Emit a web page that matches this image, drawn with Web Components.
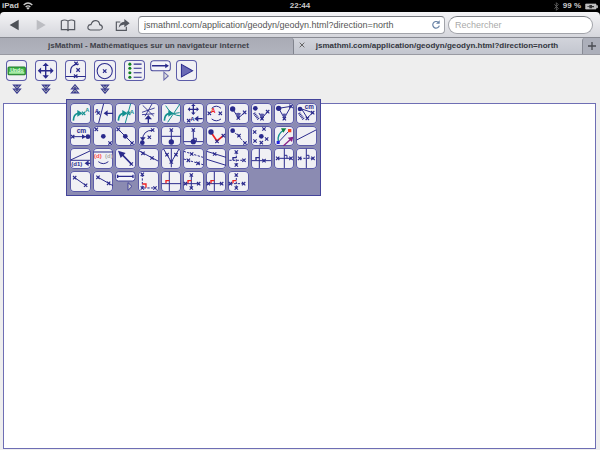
<!DOCTYPE html>
<html lang="fr">
<head>
<meta charset="utf-8">
<title>geodyn</title>
<style>
html,body{margin:0;height:100%}
body{font-family:"Liberation Sans",Arial,sans-serif;background:#eee;overflow:hidden}
</style>
</head>
<body>
<geo-app></geo-app>
<script>
const B='#2a2a8c',T='#149090',R='#f02020';
const x=(a,b,c=B,s=5)=>`<path d="M${a-s} ${b-s}l${2*s} ${2*s}M${a+s} ${b-s}l${-2*s} ${2*s}" stroke="${c}" stroke-width="3.4" fill="none"/>`;
const o=(a,b,r=6)=>`<circle cx="${a}" cy="${b}" r="${r}" fill="${B}"/>`;
const p=(d,c=B,w=3,e='')=>`<path d="${d}" stroke="${c}" stroke-width="${w}" fill="none" ${e}/>`;
const f=(d,c=B)=>`<path d="${d}" fill="${c}"/>`;
const t=(s,a,b,c=B,z=18)=>`<text x="${a}" y="${b}" fill="${c}" font-size="${z}" font-weight="bold">${s}</text>`;
const dash='stroke-dasharray="7 4"';
const curve=p('M10 53Q11 34 24 31',T,5)+f('M22 21L38 31L22 41Z',T);
const left=(a,b,y)=>p(`M${b} ${y}H${a+8}`,B,4)+f(`M${a} ${y}l12 -9v18z`);
const fan=(a,b)=>f(`M${a-8} ${b-8}Q${a} ${b-11} ${a+8} ${b-8}L${a} ${b+6}Z`,'#5a5aa8')+x(a,b+6);
const ruler=p('M9 30L23 49',B,8,'stroke-dasharray="3 2"');
const move=(a,b,s)=>p(`M${a-s+4} ${b}H${a+s-4}M${a} ${b-s+4}V${b+s-4}`,B,4)+
 f(`M${a-s} ${b}l${s*.42} ${-s*.4}v${s*.8}zM${a+s} ${b}l${-s*.42} ${-s*.4}v${s*.8}zM${a} ${b-s}l${-s*.4} ${s*.42}h${s*.8}zM${a} ${b+s}l${-s*.4} ${-s*.42}h${s*.8}z`);
const corner=c=>p('M15 37V29H25',c,4);

const ICONS={
 undo:`<rect x="6" y="20" width="50" height="23" rx="3" fill="#3db54a" stroke="#207a28" stroke-width="3"/><path d="M9 34h44v6H9z" fill="#a7eba5"/>`+t('Undo',12,34,'#e8ffe8',15),
 move:move(31,31,23),
 construct:p('M2 48H60')+p('M16 38Q14 12 40 12')+x(32,10)+x(38,29)+x(31,47),
 circle:`<circle cx="31" cy="32" r="22" fill="none" stroke="${B}" stroke-width="3"/>`+x(31,32),
 list:[12,24,37,50].map(y=>`<circle cx="17" cy="${y}" r="4.5" fill="#108020"/>`+p(`M28 ${y}H51`)).join(''),
 play:f('M16 13L49 32L16 50Z','#6969b5')+p('M16 13L49 32L16 50Z'),
 a1:curve+x(41,31,T)+t('A',46,27,T,17),
 a2:t('A',5,29)+x(16,30)+p('M17 60L32 2')+left(32,61,31),
 a3:curve+x(41,31,T)+p('M31 60L47 2',T)+t('A',44,34,T),
 a4:p('M12 28L50 15M14 7L47 39M42 3L21 40M12 35L49 32',B,2.6)+p('M31 60V46',B,4)+f('M31 36l-11 13h22z'),
 a5:curve+p('M14 8Q31 38 60 39M57 3L20 58M22 34L56 29',T),
 a6:move(31,19,17)+x(17,53)+t('A',22,53)+left(34,59,47),
 a7:p('M17 16Q31 3 45 16M17 48Q31 59 45 48')+t('A',14,29,R,20)+x(10,31)+x(43,31),
 a8:o(14,18,8)+p('M14 18L31 45L50 29')+fan(31,39)+x(50,28),
 a9:o(13,16,7)+ruler+p('M24 30L33 46L49 27')+fan(33,41)+x(50,26),
 a10:p('M14 16L31 45L51 10Z')+o(14,16,8)+fan(31,41)+x(51,10),
 a11:t('cm',26,17,B,19)+o(12,18,7)+ruler+p('M17 18L50 29L34 45Z')+x(50,29)+x(34,46),
 b1:t('cm',20,22,B,20)+x(8,32)+p('M8 32H50',B,3)+f('M48 32l-12 -7v14z')+o(54,32,7),
 b2:x(10,10)+o(31,31,7)+x(51,51),
 b3:p('M10 10L51 51')+x(10,10)+o(31,31,7)+x(51,51),
 b4:p('M13 43Q15 12 44 13')+x(44,12)+f('M6 34h17l-9 11z')+x(34,34)+o(13,50,7),
 b5:x(31,12)+p('M2 31H60M31 12V46')+o(31,48,8),
 b6:x(31,12)+p('M2 47H60M31 12V46')+o(31,47,8)+p('M31 37H40V46'),
 b7:p('M15 19L33 45L52 29',R,5)+o(15,18,8)+x(33,46)+x(52,29),
 b8:p('M14 13L52 52',B,3,dash)+o(14,14,7)+x(33,29)+x(51,51),
 b9:x(11,18)+x(39,9)+o(31,31,7)+x(12,45)+x(31,50)+x(47,39),
 b10:p('M13 47Q8 26 29 12',T,4)+f('M21 7h16l-9 13z','#108040')+p('M13 49L46 14')+p('M28 60L55 35','#882288',4)+f('M58 32l-17 3l13 13z','#882288')+`<path d="M8 45h9v9H8z" fill="#2020e0"/><path d="M42 9h10v10H42z" fill="#f44020"/>`,
 b11:p('M2 42L60 12'),
 c1:p('M2 36L60 9M2 37H60')+t('(d1)',4,55,B,18)+left(44,61,46),
 c2:p('M2 12H60')+t('(d)',3,31,'#ff4b4b',18)+t('(d)',36,31,'#aaa',18)+p('M16 41Q31 53 46 41'),
 c3:p('M49 48L18 16',B,5)+f('M9 8l23 7l-15 15z')+x(49,48),
 c4:p('M2 8L60 39')+x(15,16)+x(42,30),
 c5:p('M31 2V58M7 2L31 42L55 2')+x(31,42)+x(18,20)+x(45,20),
 c6:p('M2 10L60 28M2 33L60 50',B,3,dash)+x(26,18)+x(16,37)+x(45,46),
 c7:p('M2 10L60 28M2 34L60 52')+x(26,18),
 c8:p('M25 12V52M4 37H47',B,3,dash)+corner(B)+x(25,12)+x(25,51)+x(48,37),
 c9:p('M25 2V60M2 38H60')+corner(B)+x(39,38),
 c10:p('M31 2V60M11 31H51')+p('M31 22H39V31')+x(11,31)+x(51,31),
 c11:p('M11 31H51',B,3,dash)+p('M31 2V60M31 22H39V31')+x(11,31)+x(51,31),
 d1:p('M14 20L47 43')+x(14,20)+x(47,43),
 d2:p('M15 19L60 44')+x(15,19)+x(47,37),
 d4:p('M13 11V51H51',B,3,dash)+p('M13 39H24V50',R,4)+x(13,10)+x(13,51)+x(51,51),
 d5:p('M25 2V60M2 38H60')+corner(R),
 d6:p('M25 10V52M7 38H48')+corner(R)+x(25,12)+x(25,51)+x(7,38)+x(47,38),
 d7:p('M25 2V60M7 38H48')+corner(R)+x(47,38)+x(7,38),
 d8:p('M25 10V52M7 38H48',B,3,dash)+corner(R)+x(25,12)+x(25,51)+x(7,38)+x(47,38),
 slide:`<rect x="2" y="2" width="58" height="30" rx="8" fill="#f4f4fa" stroke="#4a4a9c" stroke-width="3"/>`+p('M6 17H48',B,4)+f('M56 17l-11 -7v14z')+f('M41 36L54 47L41 59Z','#ddd')+p('M41 36L54 47L41 59Z','#6a6aac'),
 slide2:`<rect x="2" y="2" width="58" height="28" rx="8" fill="#f4f4fa" stroke="#4a4a9c" stroke-width="3"/>`+p('M8 16H54M8 11V21M54 11V21',B,4)+f('M39 35L51 46L39 58Z','#ccc')+p('M39 35L51 46L39 58Z','#44449c')
};
const svg=(inner,vb='0 0 62 62')=>`<svg viewBox="${vb}" aria-hidden="true">${inner}</svg>`;
const define=(name,html)=>customElements.define(name,class extends HTMLElement{
 constructor(){super();this.attachShadow({mode:'open'});}
 connectedCallback(){this.shadowRoot.innerHTML=typeof html==='function'?html(this):html;}
});

define('tool-button',el=>`<style>
:host{display:block;min-width:0}
button{display:block;width:100%;aspect-ratio:1;margin:0;padding:0;border:0;border-radius:4px;background:#f0f0f4;box-shadow:inset 0 0 0 1px #5c5ca8;overflow:hidden;font-family:"Liberation Sans",Arial,sans-serif}
:host([bare]) button{background:none;box-shadow:none}
svg{display:block;width:100%;height:100%}
</style><button aria-label="${el.getAttribute('label')}">${svg(ICONS[el.getAttribute('icon')])}</button>`);

define('more-toggle',`<style>
:host{display:block}
button{display:block;margin:0 auto;padding:0;border:0;background:none;width:10px;height:10px}
:host([up]) svg{transform:rotate(180deg)}
svg{display:block;width:10px;height:10px}
</style><button aria-label="Afficher les outils">${svg('<path d="M4 3h20L14 14zM4 14h20L14 26z" fill="#b4bcb4" stroke="#38388f" stroke-width="3"/><path d="M9 3h10l-5 6zM9 15h10l-5 6z" fill="#38388f"/>','0 0 28 28')}</button>`);

define('status-bar',`<style>
:host{display:grid;grid-template-columns:1fr auto 1fr;align-items:center;height:12px;background:#000;color:#ccc;font-size:8px;line-height:12px;font-weight:bold;padding:0 2px}
div{display:flex;align-items:center;gap:4px}.r{justify-content:flex-end}
.w{width:10px;height:8px}.b{width:5px;height:9px}.c{width:13px;height:7px}
</style><div><span>iPad</span><svg class="w" viewBox="0 0 30 24"><g fill="none" stroke="#ccc" stroke-width="4"><path d="M2 9Q15 -3 28 9M8 15Q15 8 22 15"/></g><path d="M10 18Q15 14 20 18L15 23Z" fill="#ccc"/></svg></div><span>22:44</span>
<div class="r"><svg class="b" viewBox="0 0 15 27"><path d="M1 7L13 19L7 25V2L13 8L1 20" fill="none" stroke="#666" stroke-width="2.5"/></svg><span>99 %</span><svg class="c" viewBox="0 0 39 21"><path d="M2 3h31v15H2zM34 8h4v6h-4z" fill="#bbb" stroke="#ccc" stroke-width="2"/><path d="M7 10h6V6h8v3h6v4h-6v3h-8v-4H7z" fill="#333"/></svg></div>`);

define('browser-bar',`<style>
:host{display:flex;align-items:center;height:25px;padding:0 7px 0 5px;gap:3px;background:linear-gradient(#f4f4f6,#d5d6dc);border-radius:4px 4px 0 0}
nav{display:flex;gap:9px;margin-right:4px}
nav button{width:18px;height:18px;padding:0;margin:0;border:0;background:none}
nav svg{display:block;width:18px;height:18px}
label{display:flex;align-items:center;box-sizing:border-box;height:18px;background:#fff;border:1px solid #a2a4aa;border-top-color:#777a80;border-radius:4px;min-width:0}
.url{flex:1;padding:0 3px 0 5px}.find{flex:0 1 145px;border-radius:9px;padding:0 6px}
input{border:0;outline:0;padding:0;margin:0;background:none;font:9px/14px "Liberation Sans",Arial,sans-serif;color:#555;width:100%;min-width:0}
.find input::placeholder{color:#aaa;opacity:1}
.rl{border:0;background:none;padding:0;width:10px;height:10px;flex:none}.rl svg{display:block;width:10px;height:10px}
</style><nav>
<button aria-label="Retour"><svg viewBox="0 0 54 54"><path d="M14 27L41 11V43Z" fill="#4e5157"/></svg></button>
<button aria-label="Suivant"><svg viewBox="0 0 54 54"><path d="M41 27L14 11V43Z" fill="#bcbdc2"/></svg></button>
<button aria-label="Signets"><svg viewBox="0 0 54 54"><path d="M27 15Q16 9 7 15V41H24L27 44L30 41H47V15Q38 9 27 15V41" fill="none" stroke="#555860" stroke-width="3.5"/></svg></button>
<button aria-label="iCloud"><svg viewBox="0 0 54 54"><path d="M13 42Q4 40 6 32Q8 25 15 26Q19 13 30 14Q40 15 41 26Q50 28 49 36Q48 42 41 42Z" fill="none" stroke="#555860" stroke-width="3.5"/></svg></button>
<button aria-label="Partager"><svg viewBox="0 0 54 54"><path d="M22 18H10V43H40V32" fill="none" stroke="#555860" stroke-width="3.5"/><path d="M17 35Q19 18 34 17V9L50 22L34 34V26Q23 25 17 35Z" fill="#555860"/></svg></button>
</nav>
<label class="url"><input aria-label="Adresse" value="jsmathml.com/application/geodyn/geodyn.html?direction=north"><button class="rl" aria-label="Actualiser"><svg viewBox="0 0 30 30"><path d="M22 7A10 10 0 1 0 25 17" fill="none" stroke="#6680a4" stroke-width="3.5"/><path d="M15 11h11V1z" fill="#6680a4"/></svg></button></label>
<label class="find"><input aria-label="Rechercher" placeholder="Rechercher"></label>`);

define('tab-strip',`<style>
:host{display:flex;height:18px;box-sizing:border-box;border-top:1px solid #888a92;border-bottom:1px solid #999aa2;background:linear-gradient(#d2d4db,#c3c6cf)}
button{border:0;margin:0;padding:0;background:none;font:bold 8px/16px "Liberation Sans",Arial,sans-serif;color:#33363e;white-space:nowrap}
.old{flex:1 1 294px;box-sizing:border-box;padding-left:4px;background:linear-gradient(#a9abb5,#b1b4be);border-right:1px solid #81848e;border-radius:0 3px 0 0;color:#3e4149}
.cur{flex:1 1 272px;box-sizing:border-box;padding-right:18px}.x{width:16px}.x svg{width:6px;height:6px}
.new{width:18px;background:#acafba;border-left:1px solid #888b95;border-radius:3px 0 0 0}.new svg{display:block;margin:auto;width:8px;height:8px}
</style><button class="old">jsMathml - Mathématiques sur un navigateur internet</button><button class="x" aria-label="Fermer"><svg viewBox="0 0 18 18"><path d="M2 2L16 16M16 2L2 16" stroke="#666" stroke-width="3"/></svg></button><button class="cur">jsmathml.com/application/geodyn/geodyn.html?direction=north</button><button class="new" aria-label="Nouvel onglet"><svg viewBox="0 0 24 24"><path d="M12 0V24M0 12H24" stroke="#484b52" stroke-width="4"/></svg></button>`);

define('tool-bar',`<style>
:host{display:flex;gap:5px;align-items:flex-start;padding:5px 6px 0;height:43px;box-sizing:border-box}
.g{display:grid;grid-template-columns:repeat(5,1fr);column-gap:8px;row-gap:3px;width:139px}
.n{width:21px}
</style><div class="g">
<tool-button icon="undo" label="Annuler"></tool-button><tool-button icon="move" label="Déplacer"></tool-button><tool-button icon="construct" label="Construire"></tool-button><tool-button icon="circle" label="Cercle"></tool-button><tool-button icon="list" label="Liste"></tool-button>
<more-toggle></more-toggle><more-toggle></more-toggle><more-toggle up></more-toggle><more-toggle></more-toggle></div>
<tool-button class="n" bare icon="slide" label="Vecteur"></tool-button><tool-button class="n" icon="play" label="Lecture"></tool-button>`);

const names={a:11,b:11,c:11,d:8};
const items=Object.entries(names).flatMap(([r,n])=>Array.from({length:n},(_,i)=>r+(i+1)));
define('tool-palette',`<style>
:host{display:grid;grid-template-columns:repeat(11,1fr);gap:2px;box-sizing:border-box;padding:3px;background:#8b8bb2;border:1px solid #44449a}
</style>`+items.map(n=>n==='d3'?'<tool-button bare icon="slide2" label="Segment"></tool-button>':`<tool-button icon="${n}" label="Outil ${n}"></tool-button>`).join(''));

define('geo-app',`<style>
:host{display:flex;flex-direction:column;min-height:100vh;background:#000}
main{flex:1;display:flex;flex-direction:column;position:relative;background:#eee}
.sheet{flex:1;background:#fff;border:1px solid #6e6eb4;margin:5px 4px 1px 3px}
tool-palette{position:absolute;left:66px;top:44px;width:255px}
</style><status-bar></status-bar><browser-bar></browser-bar><tab-strip></tab-strip><main><tool-bar></tool-bar><div class="sheet"></div><tool-palette></tool-palette></main>`);
</script>
</body>
</html>
